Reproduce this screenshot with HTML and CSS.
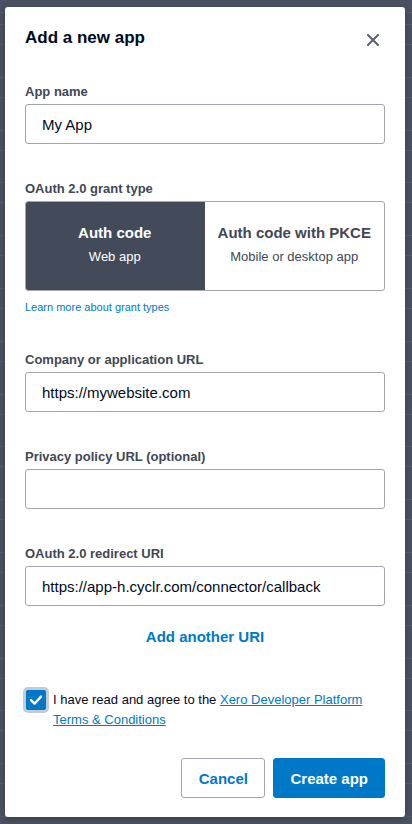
FILE: index.html
```html
<!DOCTYPE html>
<html lang="en">
<head>
<meta charset="utf-8">
<title>Add a new app</title>
<link rel="stylesheet" href="styles.css">
</head>
<body>
<div class="modal">
  <div class="modal-header">
    <h1 class="modal-title">Add a new app</h1>
    <button class="close-btn" aria-label="Close">
      <svg width="12" height="12" viewBox="0 0 12 12"><path d="M1 1 L11 11 M11 1 L1 11" stroke="#5a5f6b" stroke-width="2" stroke-linecap="square" fill="none"/></svg>
    </button>
  </div>

  <div class="field">
    <div class="label">App name</div>
    <div class="input">My App</div>
  </div>

  <div class="field">
    <div class="label">OAuth 2.0 grant type</div>
    <div class="segmented">
      <div class="seg seg-active">
        <div class="seg-title">Auth code</div>
        <div class="seg-sub">Web app</div>
      </div>
      <div class="seg">
        <div class="seg-title">Auth code with PKCE</div>
        <div class="seg-sub">Mobile or desktop app</div>
      </div>
    </div>
    <a class="small-link" href="#">Learn more about grant types</a>
  </div>

  <div class="field">
    <div class="label">Company or application URL</div>
    <div class="input">https://mywebsite.com</div>
  </div>

  <div class="field">
    <div class="label">Privacy policy URL (optional)</div>
    <div class="input"></div>
  </div>

  <div class="field">
    <div class="label">OAuth 2.0 redirect URI</div>
    <div class="input">https://app-h.cyclr.com/connector/callback</div>
  </div>

  <div class="add-uri">Add another URI</div>

  <div class="agree">
    <span class="checkbox">
      <svg width="20" height="20" viewBox="0 0 20 20"><path d="M5 10.2 L8.5 13.6 L15 6.6" stroke="#fff" stroke-width="2.4" fill="none" stroke-linecap="round" stroke-linejoin="round"/></svg>
    </span>
    <span class="agree-text">I have read and agree to the <a href="#">Xero Developer Platform</a><br><a href="#">Terms &amp; Conditions</a></span>
  </div>

  <div class="actions">
    <button class="btn btn-secondary">Cancel</button>
    <button class="btn btn-primary">Create app</button>
  </div>
</div>
</body>
</html>
```

FILE: styles.css
```css
html, body {
  margin: 0;
  padding: 0;
}
body {
  width: 412px;
  height: 824px;
  overflow: hidden;
  background-color: #4a5161;
  background-image: repeating-linear-gradient(to bottom,
    #565d6c 0px, #565d6c 1px,
    transparent 1px, transparent 20px,
    #565d6c 20px, #565d6c 21px,
    transparent 21px, transparent 52.8px);
  background-position: 0 24px;
  font-family: "Liberation Sans", Arial, sans-serif;
  color: #000a1e;
  padding-top: 7px;
  box-sizing: border-box;
}
.modal {
  width: 400px;
  height: 810px;
  margin-left: 5px;
  background: #fff;
  border-radius: 3px;
  box-shadow: 0 2px 6px rgba(0,0,0,0.25);
  box-sizing: border-box;
  padding: 21px 20px 19px 20px;
  display: flex;
  flex-direction: column;
}
.modal-header {
  display: flex;
  align-items: center;
  justify-content: space-between;
  height: 20px;
  margin-bottom: 36px;
}
.modal-title {
  margin: 0;
  font-size: 17px;
  line-height: 20px;
  font-weight: bold;
  color: #000a1e;
}
.close-btn {
  border: 0;
  background: none;
  padding: 0;
  margin: 3px 6px 0 0;
  width: 12px;
  height: 12px;
  display: flex;
}
.field {
  display: flex;
  flex-direction: column;
  margin-bottom: 37px;
}
.label {
  font-size: 13px;
  line-height: 16px;
  font-weight: bold;
  color: #404756;
  margin-bottom: 4px;
}
.input {
  height: 40px;
  box-sizing: border-box;
  border: 1px solid #a3a6ae;
  border-radius: 3px;
  padding: 0 16px;
  display: flex;
  align-items: center;
  font-size: 15px;
  color: #000a1e;
}
.segmented {
  display: flex;
  height: 90px;
  box-sizing: border-box;
  border: 1px solid #a3a6ae;
  border-radius: 3px;
  overflow: hidden;
}
.seg {
  flex: 1;
  display: flex;
  flex-direction: column;
  align-items: center;
  justify-content: center;
  padding-bottom: 3px;
  color: #404756;
}
.seg-active {
  background: #434a59;
  color: #fff;
  margin: -1px 0 -1px -1px;
}
.seg-title {
  font-size: 15px;
  line-height: 20px;
  font-weight: bold;
}
.seg-sub {
  font-size: 13px;
  line-height: 18px;
  margin-top: 5px;
}
.small-link {
  display: block;
  margin-top: 9px;
  font-size: 11px;
  line-height: 15px;
  color: #0078c8;
  text-decoration: none;
}
.add-uri {
  margin-top: -16px;
  text-align: center;
  font-size: 15px;
  line-height: 20px;
  font-weight: bold;
  color: #0078c8;
}
.agree {
  display: flex;
  align-items: flex-start;
  margin-top: 43px;
  padding-left: 1px;
}
.checkbox {
  flex: none;
  width: 20px;
  height: 20px;
  background: #0078c8;
  border-radius: 2px;
  box-shadow: 0 0 0 3px #c6cad1;
  display: flex;
  margin-right: 7px;
}
.agree-text {
  font-size: 13px;
  line-height: 19.5px;
  color: #000a1e;
}
.agree-text a {
  color: #0078c8;
  text-decoration: underline;
}
.actions {
  margin-top: auto;
  display: flex;
  justify-content: flex-end;
  gap: 8px;
}
.btn {
  height: 40px;
  box-sizing: border-box;
  border-radius: 3px;
  font-family: "Liberation Sans", Arial, sans-serif;
  font-size: 15px;
  font-weight: bold;
}
.btn-secondary {
  background: #fff;
  border: 1px solid #a3a6ae;
  color: #0078c8;
  padding: 0 16.5px;
}
.btn-primary {
  background: #0078c8;
  border: 1px solid #0078c8;
  color: #fff;
  padding: 0 16px;
}
```
